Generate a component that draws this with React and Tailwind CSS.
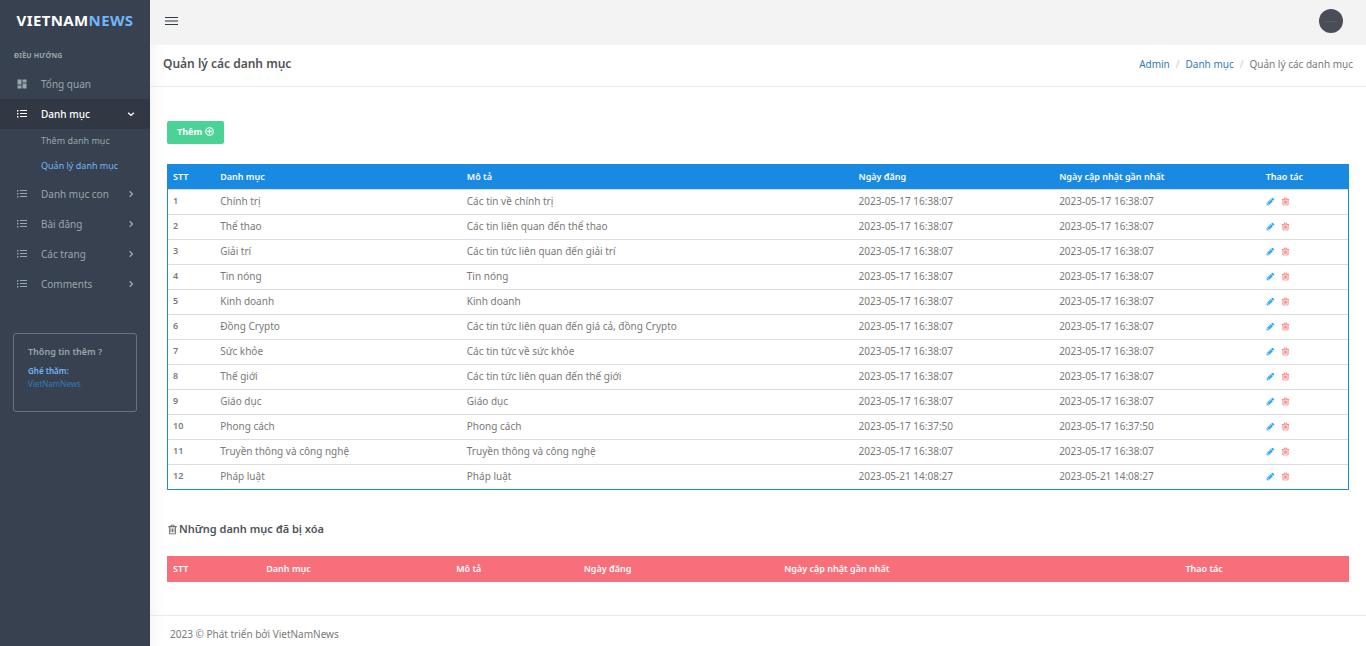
import React from 'react';
import { MdDashboard } from 'react-icons/md';

const TrashIcon = ({ className }) => (
    <svg viewBox="0 0 1792 1792" fill="currentColor" className={className} aria-hidden="true">
        <path d="M704 736v576q0 14-9 23t-23 9h-64q-14 0-23-9t-9-23v-576q0-14 9-23t23-9h64q14 0 23 9t9 23zm256 0v576q0 14-9 23t-23 9h-64q-14 0-23-9t-9-23v-576q0-14 9-23t23-9h64q14 0 23 9t9 23zm256 0v576q0 14-9 23t-23 9h-64q-14 0-23-9t-9-23v-576q0-14 9-23t23-9h64q14 0 23 9t9 23zm128 724v-948h-896v948q0 22 7 40.5t14.5 27 10.5 8.5h832q3 0 10.5-8.5t14.5-27 7-40.5zm-672-1076h448l-48-117q-7-9-17-11h-317q-10 2-17 11zm928 32v64q0 14-9 23t-23 9h-96v948q0 83-47 143.5t-113 60.5h-832q-66 0-113-58.5t-47-141.5v-952h-96q-14 0-23-9t-9-23v-64q0-14 9-23t23-9h309l70-167q15-37 54-63t79-26h320q40 0 79 26t54 63l70 167h309q14 0 23 9t9 23z" />
    </svg>
);

const PencilIcon = ({ className }) => (
    <svg viewBox="0 0 1792 1792" fill="currentColor" className={className} aria-hidden="true">
        <path d="M491 1536l91-91-235-235-91 91v107h128v128h107zm523-928q0-22-22-22-10 0-17 7l-542 542q-7 7-7 17 0 22 22 22 10 0 17-7l542-542q7-7 7-17zm-54-192l416 416-832 832h-416v-416zm683 96q0 53-37 90l-166 166-416-416 166-165q36-38 90-38 53 0 91 38l235 234q37 39 37 91z" />
    </svg>
);

const PlusCircleIcon = () => (
    <svg viewBox="0 0 10 10" fill="none" stroke="currentColor" className="size-[9px]" aria-hidden="true">
        <circle cx="5" cy="5" r="4.2" strokeWidth="1.2" />
        <path d="M5 2.6v4.8M2.6 5h4.8" strokeWidth="1.4" />
    </svg>
);

const ListIcon = () => (
    <svg viewBox="0 0 12 12" width="12" height="12" fill="currentColor" aria-hidden="true">
        <path d="M1 2h1.4v1.4H1zM1 5h1.4v1.4H1zM1 8h1.4v1.4H1zM4 2h7v1H4zM4 5h7v1H4zM4 8h7v1H4z" />
    </svg>
);

const Arrow = ({ open }) => (
    <svg viewBox="0 0 8 8" fill="none" stroke="currentColor" strokeWidth="1.4" className="size-2" aria-hidden="true">
        <path d={open ? 'M1.2 2.7L4 5.4l2.8-2.7' : 'M2.7 1.2L5.4 4 2.7 6.8'} />
    </svg>
);

const categories = [
    { name: 'Chính trị', desc: 'Các tin về chính trị', date: '2023-05-17 16:38:07' },
    { name: 'Thể thao', desc: 'Các tin liên quan đến thể thao', date: '2023-05-17 16:38:07' },
    { name: 'Giải trí', desc: 'Các tin tức liên quan đến giải trí', date: '2023-05-17 16:38:07' },
    { name: 'Tin nóng', desc: 'Tin nóng', date: '2023-05-17 16:38:07' },
    { name: 'Kinh doanh', desc: 'Kinh doanh', date: '2023-05-17 16:38:07' },
    { name: 'Đồng Crypto', desc: 'Các tin tức liên quan đến giá cả, đồng Crypto', date: '2023-05-17 16:38:07' },
    { name: 'Sức khỏe', desc: 'Các tin tức về sức khỏe', date: '2023-05-17 16:38:07' },
    { name: 'Thế giới', desc: 'Các tin tức liên quan đến thế giới', date: '2023-05-17 16:38:07' },
    { name: 'Giáo dục', desc: 'Giáo dục', date: '2023-05-17 16:38:07' },
    { name: 'Phong cách', desc: 'Phong cách', date: '2023-05-17 16:37:50' },
    { name: 'Truyền thông và công nghệ', desc: 'Truyền thông và công nghệ', date: '2023-05-17 16:38:07' },
    { name: 'Pháp luật', desc: 'Pháp luật', date: '2023-05-21 14:08:27' },
];

const menu = [
    { label: 'Tổng quan', icon: MdDashboard },
    {
        label: 'Danh mục',
        icon: ListIcon,
        open: true,
        children: [
            { label: 'Thêm danh mục' },
            { label: 'Quản lý danh mục', active: true },
        ],
    },
    { label: 'Danh mục con', icon: ListIcon, arrow: true },
    { label: 'Bài đăng', icon: ListIcon, arrow: true },
    { label: 'Các trang', icon: ListIcon, arrow: true },
    { label: 'Comments', icon: ListIcon, arrow: true },
];

const headings = ['STT', 'Danh mục', 'Mô tả', 'Ngày đăng', 'Ngày cập nhật gần nhất', 'Thao tác'];
const listWidths = ['w-[4%]', 'w-[20.9%]', 'w-[33.2%]', 'w-[17%]', 'w-[17.5%]', 'w-[7.4%]'];
const trashWidths = ['w-[7.9%]', 'w-[16.1%]', 'w-[10.8%]', 'w-[17%]', 'w-[34%]', 'w-[14.2%]'];

const TableHead = ({ widths, color }) => (
    <thead className={color}>
        <tr className="h-[25px] text-left text-[9px] leading-4 text-white">
            {headings.map((h, i) => (
                <th key={h} scope="col" className={`px-[5px] py-0 font-semibold whitespace-nowrap ${widths[i]}`}>{h}</th>
            ))}
        </tr>
    </thead>
);

const Sidebar = () => (
    <aside className="w-[150px] shrink-0 bg-[#38414f] text-[#98a6ad] shadow-[0_0_16px_rgba(0,0,0,0.08)]">
        <a href="#home" className="flex h-11 items-center justify-center pb-1 text-[15px] font-bold leading-5 tracking-wide text-white">
            <span>VIETNAM<span className="text-[#71b6f9]">NEWS</span></span>
        </a>
        <p className="px-[14px] pt-1 text-[7px] font-bold uppercase leading-4 tracking-wide">Điều hướng</p>
        <ul className="pt-[5px] text-[10px] leading-4">
            {menu.map(item => (
                <li key={item.label}>
                    <a
                        href="#menu"
                        className={`flex h-[30px] items-center pl-4 pr-[15px] ${item.open ? 'bg-[#313844] font-medium text-white' : ''}`}
                    >
                        <item.icon size={12} />
                        <span className="ml-[13px] flex-1">{item.label}</span>
                        {(item.arrow || item.open) && <Arrow open={item.open} />}
                    </a>
                    {item.children && (
                        <ul className="text-[9px]">
                            {item.children.map(child => (
                                <li key={child.label}>
                                    <a href="#sub" className={`flex h-[25px] items-center pb-px pl-[41px] ${child.active ? 'text-[#71b6f9]' : ''}`}>
                                        {child.label}
                                    </a>
                                </li>
                            ))}
                        </ul>
                    )}
                </li>
            ))}
        </ul>
        <div className="mx-[13px] mt-[34px] h-[79px] rounded-[3px] border border-[#69737f] px-[14px] pt-[10px]">
            <h5 className="text-[9px] font-semibold leading-4">Thông tin thêm ?</h5>
            <p className="pt-1 text-[8px] font-semibold leading-[13px] text-[#71b6f9]">Ghé thăm:</p>
            <a href="#site" className="block text-[8px] leading-[13px] text-[#337ab7]">VietNamNews</a>
        </div>
    </aside>
);

export default function App() {
    return (
        <div className="flex min-h-screen bg-white font-['Noto_Sans',sans-serif] text-[10px] leading-4 text-[#797979]">
            <Sidebar />
            <div className="flex min-w-0 flex-1 flex-col">
                <header className="flex h-[45px] items-center justify-between bg-[#f3f3f3] pb-[3px] pl-[15px] pr-[23px]">
                    <button type="button" aria-label="Menu" className="flex w-[13px] flex-col gap-[2px]">
                        <span className="h-px bg-[#313a46]" />
                        <span className="h-[2px] bg-[#8d9299]" />
                        <span className="h-px bg-[#313a46]" />
                    </button>
                    <button type="button" aria-label="Tài khoản" className="flex size-6 items-center justify-center rounded-full bg-[#494d57]">
                        <span className="h-px w-3 bg-[#5a5e67]" />
                    </button>
                </header>

                <div className="flex h-[42px] items-center justify-between border-b border-[#eaeaea] px-[13px] pb-1">
                    <h4 className="text-[12px] font-semibold leading-5 text-[#505458]">Quản lý các danh mục</h4>
                    <nav className="flex">
                        <a href="#admin" className="text-[#337ab7]">Admin</a>
                        <span className="px-[6px] text-[#cccccc]">/</span>
                        <a href="#category" className="text-[#337ab7]">Danh mục</a>
                        <span className="px-[6px] text-[#cccccc]">/</span>
                        <span>Quản lý các danh mục</span>
                    </nav>
                </div>

                <main className="flex-1 px-[17px] pt-[34px]">
                    <button type="button" className="flex h-[23px] items-center gap-[3px] rounded-[2px] bg-[#4bd396] px-[10px] pb-[2px] text-[9px] font-bold text-white">
                        Thêm <PlusCircleIcon />
                    </button>

                    <table className="mt-5 w-full table-fixed border-separate border-spacing-0 border border-t-0 border-[#188ae2]">
                        <TableHead widths={listWidths} color="bg-[#188ae2]" />
                        <tbody>
                            {categories.map((c, i) => (
                                <tr key={c.name} className="h-[25px] *:border-t *:border-[#dddddd] *:px-[5px] *:pt-0 *:pb-[2px]">
                                    <th scope="row" className="text-left text-[9px] font-semibold">{i + 1}</th>
                                    <td>{c.name}</td>
                                    <td>{c.desc}</td>
                                    <td>{c.date}</td>
                                    <td>{c.date}</td>
                                    <td>
                                        <div className="flex items-center gap-[6px]">
                                            <a href="#edit" aria-label="Sửa"><PencilIcon className="size-[9px] text-[#29a8f5]" /></a>
                                            <a href="#delete" aria-label="Xóa"><TrashIcon className="size-[9px] text-[#f05050]" /></a>
                                        </div>
                                    </td>
                                </tr>
                            ))}
                        </tbody>
                    </table>

                    <h4 className="mt-[29px] flex items-center gap-px text-[11px] font-semibold leading-5 text-[#505458]">
                        <TrashIcon className="size-[11px]" /> Những danh mục đã bị xóa
                    </h4>

                    <table className="mt-[17px] w-full table-fixed border-separate border-spacing-0 border border-t-0 border-[#f76f7a]">
                        <TableHead widths={trashWidths} color="bg-[#f76f7a]" />
                    </table>
                </main>

                <footer className="border-t border-[#eaeaea] px-5 pb-1 pt-[10px]">2023 © Phát triển bởi VietNamNews</footer>
            </div>
        </div>
    );
}
